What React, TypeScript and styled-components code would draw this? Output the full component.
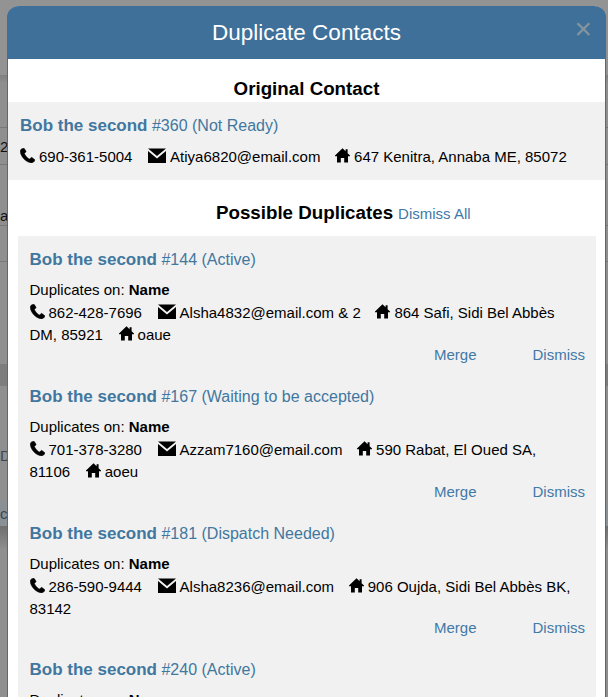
import React from 'react';
import styled, { createGlobalStyle } from 'styled-components';

const GlobalStyle = createGlobalStyle`
  html, body {
    margin: 0;
    padding: 0;
    height: 697px;
    overflow: hidden;
    background: #8f8f8f;
    font-family: "Liberation Sans", Arial, sans-serif;
    font-size: 15px;
    color: #000;
  }
`;

const Screen = styled.div`
  position: relative;
  width: 608px;
  height: 697px;
  overflow: hidden;
`;

const Behind = styled.div`
  display: flex;
  flex-direction: column;
  height: 697px;
`;

const BehindRow = styled.div<{ $h: number; $bg?: string; $line?: boolean; $pad?: number; $color?: string }>`
  flex: none;
  height: ${(p) => p.$h}px;
  box-sizing: border-box;
  padding-top: ${(p) => p.$pad || 0}px;
  background: ${(p) => p.$bg || '#8f8f8f'};
  border-bottom: ${(p) => (p.$line ? '1px solid #777' : 'none')};
  display: flex;
  align-items: center;
  font-size: 15px;
  color: ${(p) => p.$color || '#101010'};
  white-space: nowrap;
`;

const Modal = styled.div`
  position: absolute;
  left: 7px;
  top: 6px;
  width: 599px;
  height: 760px;
  box-sizing: border-box;
  background: #fff;
  border: 1px solid #3e7099;
  border-top: none;
  border-radius: 12px 12px 0 0;
`;

const Header = styled.div`
  height: 53px;
  margin: 0 -1px;
  display: flex;
  align-items: center;
  justify-content: center;
  position: relative;
  background: #3e7099;
  border-radius: 12px 12px 0 0;
  color: #fff;
  font-size: 22.5px;
`;

const Close = styled.span`
  position: absolute;
  right: 14px;
  top: 8px;
  font-size: 30px;
  line-height: 30px;
  color: #84959f;
`;

const SectionTitle = styled.h3`
  margin: 0;
  padding-top: 19px;
  height: 43px;
  box-sizing: border-box;
  text-align: center;
  font-size: 18.75px;
  line-height: 22px;
  font-weight: 700;
`;

const OriginalBlock = styled.div`
  height: 78px;
  box-sizing: border-box;
  padding: 13px 12px 0;
  background: #f1f1f1;
`;

const DuplicatesHeading = styled.div`
  display: grid;
  grid-template-columns: 1fr auto 1fr;
  column-gap: 5px;
  align-items: baseline;
  padding: 22px 4px 0 0;
  height: 56px;
  box-sizing: border-box;
  line-height: 22px;
  font-size: 18.75px;
  font-weight: 700;
  span {
    grid-column: 2;
  }
`;

const LinkText = styled.a`
  color: #4179a8;
  font-size: 15px;
  font-weight: 400;
  cursor: pointer;
`;

const DuplicateList = styled.div`
  margin: 0 9px 0 10px;
  padding: 13.3px 11px 0 11.5px;
  background: #f1f1f1;
`;

const DuplicateItem = styled.div`
  height: 136.67px;
`;

const ContactName = styled.div`
  font-size: 16px;
  line-height: 22px;
  color: #41779f;
  margin-bottom: 8px;
  b {
    font-size: 17px;
    font-weight: 700;
  }
`;

const Info = styled.div`
  line-height: 22px;
  font-size: 15px;
`;

const ContactInfo = styled(Info)`
  margin-top: 1px;
`;

const OriginalInfo = styled(Info)`
  margin-top: 9px;
`;

const Detail = styled.span`
  margin-right: 11.5px;
  svg {
    vertical-align: -1px;
    margin-right: 4px;
  }
`;

const HomeDetail = styled(Detail)`
  margin-left: -1px;
`;

const Actions = styled.div`
  display: flex;
  justify-content: flex-end;
  gap: 56px;
  margin-top: -2.3px;
  line-height: 22px;
`;

const PhoneIcon = () => (
  <svg width="15" height="15" viewBox="0 0 15 15">
    <path d="M3.4 .2 C2.4 .3 .6 1.2 .3 2.6 C-.1 5 1.6 8.4 3.8 10.8 C6 13.2 9.6 15 11.8 14.9 C13 14.8 14.3 13.6 14.8 12.6 C15 12.2 14.9 11.9 14.6 11.6 L12 9.6 C11.6 9.3 11.2 9.3 10.9 9.7 L9.9 10.8 C9.6 11.1 9.3 11.1 9 10.9 C7.4 9.8 5.4 7.6 4.6 6 C4.4 5.7 4.5 5.4 4.8 5.1 L5.8 4.1 C6.1 3.8 6.1 3.4 5.9 3 L4.3 .6 C4.1 .3 3.8 .1 3.4 .2 Z" fill="#000" stroke="#000" strokeWidth=".5" />
  </svg>
);

const MailIcon = () => (
  <svg width="18" height="15" viewBox="0 0 18 15">
    <path d="M0 .5 H18 L9 8 Z M0 3 L9 10.5 L18 3 V15 H0 Z" fill="#000" />
  </svg>
);

const HomeIcon = () => (
  <svg width="15" height="15" viewBox="0 0 15 15">
    <path d="M7.5 .3 L10.6 3.3 V1.3 H12.6 V5.2 L15 7.6 V8.2 H13 V14.6 H9.2 V10 H5.8 V14.6 H2 V8.2 H0 V7.6 Z" fill="#000" />
  </svg>
);

interface Duplicate {
  id: number;
  status: string;
  phone: string;
  email: string;
  address: string;
  extra?: string;
}

const duplicates: Duplicate[] = [
  { id: 144, status: 'Active', phone: '862-428-7696', email: 'Alsha4832@email.com & 2', address: '864 Safi, Sidi Bel Abbès DM, 85921', extra: 'oaue' },
  { id: 167, status: 'Waiting to be accepted', phone: '701-378-3280', email: 'Azzam7160@email.com', address: '590 Rabat, El Oued SA, 81106', extra: 'aoeu' },
  { id: 181, status: 'Dispatch Needed', phone: '286-590-9444', email: 'Alsha8236@email.com', address: '906 Oujda, Sidi Bel Abbès BK, 83142' },
  { id: 240, status: 'Active', phone: '555-201-7731', email: 'Alsha2240@email.com', address: '12 Oran, Annaba ME, 85072' },
];

const App: React.FC = () => {
  return (
    <Screen>
      <GlobalStyle />
      <Behind>
        <BehindRow $h={75} $bg="#939393" />
        <BehindRow $h={8} $bg="linear-gradient(#7f7f7f, #8f8f8f)" />
        <BehindRow $h={45} $line />
        <BehindRow $h={37} $line>2</BehindRow>
        <BehindRow $h={61} $line $pad={40}>ag</BehindRow>
        <BehindRow $h={36} $line />
        <BehindRow $h={102} />
        <BehindRow $h={22} $bg="#7d7d7d" />
        <BehindRow $h={115} $pad={24} $color="#3a4650">De</BehindRow>
        <BehindRow $h={25} $bg="#8a9196" $color="#3a4650">c</BehindRow>
        <BehindRow $h={24} $bg="linear-gradient(#6f6f6f, #8f8f8f)" />
      </Behind>
      <Modal>
        <Header>
          Duplicate Contacts
          <Close>×</Close>
        </Header>
        <SectionTitle>Original Contact</SectionTitle>
        <OriginalBlock>
          <ContactName>
            <b>Bob the second</b> #360 (Not Ready)
          </ContactName>
          <OriginalInfo>
            <Detail><PhoneIcon />690-361-5004</Detail>{' '}
            <Detail><MailIcon />Atiya6820@email.com</Detail>{' '}
            <HomeDetail><HomeIcon />647 Kenitra, Annaba ME, 85072</HomeDetail>
          </OriginalInfo>
        </OriginalBlock>
        <DuplicatesHeading>
          <span>Possible Duplicates</span>
          <LinkText>Dismiss All</LinkText>
        </DuplicatesHeading>
        <DuplicateList>
          {duplicates.map((d) => (
            <DuplicateItem key={d.id}>
              <ContactName>
                <b>Bob the second</b> #{d.id} ({d.status})
              </ContactName>
              <Info>Duplicates on: <b>Name</b></Info>
              <ContactInfo>
                <Detail><PhoneIcon />{d.phone}</Detail>{' '}
                <Detail><MailIcon />{d.email}</Detail>{' '}
                <HomeDetail><HomeIcon />{d.address}</HomeDetail>{' '}
                {d.extra && <Detail><HomeIcon />{d.extra}</Detail>}
              </ContactInfo>
              <Actions>
                <LinkText>Merge</LinkText>
                <LinkText>Dismiss</LinkText>
              </Actions>
            </DuplicateItem>
          ))}
        </DuplicateList>
      </Modal>
    </Screen>
  );
};

export default App;
